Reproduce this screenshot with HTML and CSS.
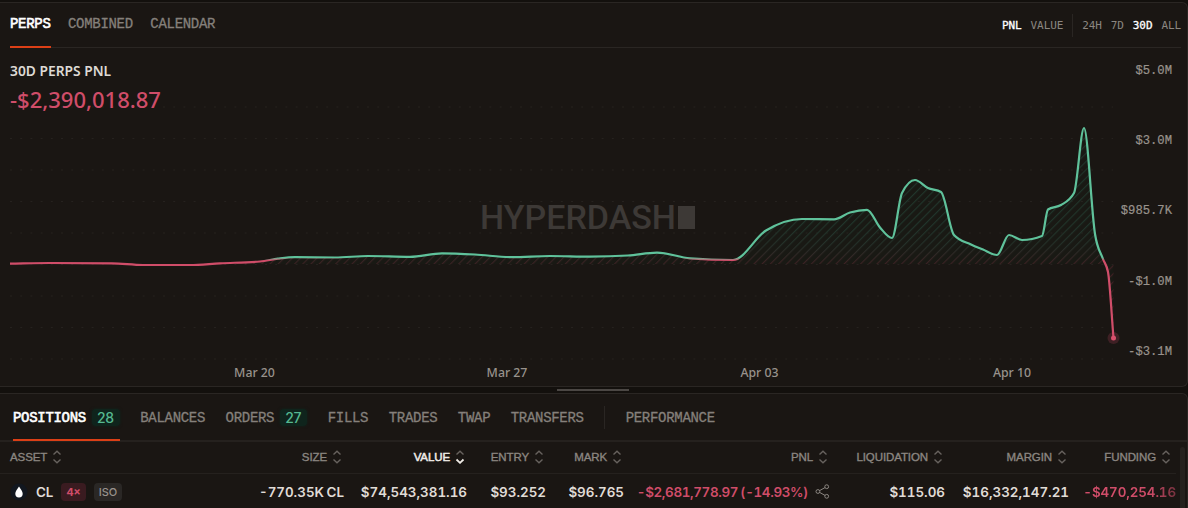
FILE: index.html
```html
<!DOCTYPE html>
<html lang="en">

<head>
    <meta charset="UTF-8">
    <meta name="viewport" content="width=device-width, initial-scale=1.0">
    <title>Hyperdash</title>
    <link rel="stylesheet" href="styles.css">
</head>

<body>

    <svg width="0" height="0" class="sprite">
        <symbol id="sort" viewBox="0 0 10 14">
            <path d="M1.5 4.5 5 1.2 8.5 4.5" />
            <path d="M1.5 9.5 5 12.8 8.5 9.5" />
        </symbol>
    </svg>

    <section class="panel chart-panel">
        <div class="chart-head">
            <nav class="tabs">
                <a class="tab active">PERPS</a>
                <a class="tab">COMBINED</a>
                <a class="tab">CALENDAR</a>
            </nav>
            <div class="toggles">
                <span class="on">PNL</span>
                <span>VALUE</span>
                <i class="sep"></i>
                <span>24H</span>
                <span>7D</span>
                <span class="on">30D</span>
                <span>ALL</span>
            </div>
        </div>

        <div class="chart-area">
            <div class="summary">
                <div class="summary-title">30D PERPS PNL</div>
                <div class="summary-value">-$2,390,018.87</div>
            </div>
            <svg class="chart" width="1188" height="338" viewBox="0 48 1188 338">
                <defs>
                    <linearGradient id="stroke" gradientUnits="userSpaceOnUse" x1="0" y1="257.5" x2="0" y2="260.5">
                        <stop offset="0" stop-color="#5fc29b" />
                        <stop offset="1" stop-color="#d04d69" />
                    </linearGradient>
                    <linearGradient id="hatch-color" gradientUnits="userSpaceOnUse" x1="0" y1="225" x2="0" y2="266">
                        <stop offset="0" stop-color="#21352b" />
                        <stop offset="0.5" stop-color="#253029" />
                        <stop offset="1" stop-color="#3f2023" />
                    </linearGradient>
                    <pattern id="hatch" width="5.8" height="5.8" patternUnits="userSpaceOnUse" patternTransform="rotate(45)">
                        <rect width="1.2" height="5.8" fill="#fff" />
                    </pattern>
                    <mask id="hatch-mask">
                        <rect y="48" width="1188" height="338" fill="url(#hatch)" />
                    </mask>
                </defs>
                <g id="grid" class="grid"></g>
                <text class="watermark" x="480" y="229" textLength="196" lengthAdjust="spacingAndGlyphs">HYPERDASH</text>
                <rect class="watermark" x="678" y="206" width="17" height="23" />
                <path id="area-tint" class="area-tint" />
                <g mask="url(#hatch-mask)">
                    <path id="area" fill="url(#hatch-color)" />
                </g>
                <path id="line" class="line" stroke="url(#stroke)" />
                <circle class="halo" cx="1113.5" cy="338" r="6" />
                <circle class="dot" cx="1113.5" cy="338" r="2.5" />
                <g class="y-axis">
                    <text x="1172" y="74">$5.0M</text>
                    <text x="1172" y="144">$3.0M</text>
                    <text x="1172" y="214">$985.7K</text>
                    <text x="1172" y="285">-$1.0M</text>
                    <text x="1172" y="355">-$3.1M</text>
                </g>
                <g class="x-axis">
                    <text x="254.5" y="377">Mar 20</text>
                    <text x="507" y="377">Mar 27</text>
                    <text x="759.5" y="377">Apr 03</text>
                    <text x="1012" y="377">Apr 10</text>
                </g>
            </svg>
        </div>
    </section>

    <div class="splitter"><i></i></div>

    <section class="panel table-panel">
        <nav class="tabs table-tabs">
            <a class="tab active">POSITIONS <b class="count">28</b></a>
            <a class="tab">BALANCES</a>
            <a class="tab">ORDERS <b class="count">27</b></a>
            <a class="tab">FILLS</a>
            <a class="tab">TRADES</a>
            <a class="tab">TWAP</a>
            <a class="tab">TRANSFERS</a>
            <i class="sep"></i>
            <a class="tab">PERFORMANCE</a>
        </nav>

        <div class="table-wrap">
            <div class="table">
                <div class="row head">
                    <span class="left">ASSET <svg class="sort"><use href="#sort" /></svg></span>
                    <span>SIZE <svg class="sort"><use href="#sort" /></svg></span>
                    <span class="sorted">VALUE
                        <svg class="sort" viewBox="0 0 10 14">
                            <path d="M1.5 4.5 5 1.2 8.5 4.5" />
                            <path class="down" d="M1.5 9.5 5 12.8 8.5 9.5" />
                        </svg>
                    </span>
                    <span>ENTRY <svg class="sort"><use href="#sort" /></svg></span>
                    <span>MARK <svg class="sort"><use href="#sort" /></svg></span>
                    <span>PNL <svg class="sort"><use href="#sort" /></svg></span>
                    <span>LIQUIDATION <svg class="sort"><use href="#sort" /></svg></span>
                    <span>MARGIN <svg class="sort"><use href="#sort" /></svg></span>
                    <span class="last">FUNDING <svg class="sort"><use href="#sort" /></svg></span>
                </div>
                <div class="row">
                    <span class="left">
                        <svg class="coin" width="18" height="18" viewBox="0 0 18 18">
                            <circle cx="9" cy="9" r="8.5" fill="#12171f" />
                            <path d="M9 3.5C10.8 6.2 12.7 8.4 12.7 10.8a3.7 3.7 0 0 1-7.4 0C5.3 8.4 7.2 6.2 9 3.5Z" fill="#fff" />
                        </svg>
                        <span class="asset">CL</span>
                        <span class="badge lev">4×</span>
                        <span class="badge">ISO</span>
                    </span>
                    <span>-770.35K CL</span>
                    <span>$74,543,381.16</span>
                    <span>$93.252</span>
                    <span>$96.765</span>
                    <span class="neg pnl">-$2,681,778.97 (-14.93%)
                        <svg class="share" width="15" height="15" viewBox="0 0 15 15">
                            <circle cx="2.9" cy="7.5" r="1.9" />
                            <circle cx="11.7" cy="2.7" r="1.9" />
                            <circle cx="11.7" cy="12.3" r="1.9" />
                            <path d="M4.6 6.6 10 3.6M4.6 8.4 10 11.4" />
                        </svg>
                    </span>
                    <span>$115.06</span>
                    <span>$16,332,147.21</span>
                    <span class="neg fade">-$470,254.16</span>
                </div>
            </div>
            <div class="scrollbar"></div>
        </div>
    </section>

    <script src="chart.js"></script>

</body>

</html>
```
FILE: styles.css
```css
body {
    margin: 0;
    height: 508px;
    overflow: hidden;
    background-color: #13100d;
    color: #e0dcd7;
    font-family: Inter, "Liberation Sans", sans-serif;
    display: flex;
    flex-direction: column;
    padding-top: 2px;
    box-sizing: border-box;
}

.sprite {
    display: none;
}

.panel {
    background-color: #1a1613;
    border: 1px solid #2a2623;
    border-left: none;
    box-sizing: border-box;
    flex-shrink: 0;
}

.chart-panel {
    height: 385px;
    border-radius: 0 6px 6px 0;
}

.chart-head {
    display: flex;
    justify-content: space-between;
    height: 45px;
    margin: 0 6px 0 10px;
    border-bottom: 1px solid #2a2623;
    box-sizing: border-box;
}

.tabs {
    display: flex;
    gap: 17.5px;
    font-family: "Liberation Mono", monospace;
    font-size: 14px;
    letter-spacing: -0.3px;
    color: #85807b;
}

.tab {
    display: flex;
    align-items: center;
    height: 45px;
    box-sizing: border-box;
    padding-bottom: 3px;
    -webkit-text-stroke: 0.3px currentColor;
}

.tab.active {
    color: #fff;
    border-bottom: 2px solid #dc3f16;
    padding-bottom: 1px;
    -webkit-text-stroke-width: 0.6px;
}

.toggles {
    display: flex;
    align-items: center;
    gap: 9px;
    font-family: "DejaVu Sans Mono", monospace;
    font-size: 11px;
    letter-spacing: -0.1px;
    color: #8b8681;
}

.toggles .on {
    color: #fff;
    -webkit-text-stroke: 0.3px #fff;
}

.sep {
    width: 1px;
    height: 23px;
    background-color: #2a2623;
}

.chart-area {
    position: relative;
}

.chart {
    display: block;
}

.summary {
    position: absolute;
    left: 10px;
    top: 13px;
    font-family: "Noto Sans", sans-serif;
}

.summary-title {
    font-size: 13.8px;
    line-height: 20px;
    font-weight: 600;
    color: #dedad5;
}

.summary-value {
    margin-top: 3px;
    font-size: 22px;
    line-height: 30px;
    font-weight: 500;
    color: #d04d69;
}

.grid line {
    stroke: #26221f;
    stroke-dasharray: 2 8.2;
}

.watermark {
    fill: #3d3936;
    font-family: Roboto, sans-serif;
    font-size: 33px;
    font-weight: 500;
}

.area-tint {
    fill: #1a3325;
    opacity: 0.12;
}

.line {
    fill: none;
    stroke-width: 2.2;
    stroke-linejoin: round;
}

.halo {
    fill: #d04d69;
    opacity: 0.2;
}

.dot {
    fill: #d9506c;
}

.y-axis text {
    fill: #98928c;
    font-family: "Liberation Mono", monospace;
    font-size: 12.2px;
    text-anchor: end;
    stroke: #98928c;
    stroke-width: 0.2px;
}

.x-axis text {
    fill: #98928c;
    font-family: "Noto Sans", sans-serif;
    font-size: 12.3px;
    font-weight: 500;
    text-anchor: middle;
}

.splitter {
    height: 6px;
    flex-shrink: 0;
    display: flex;
    justify-content: center;
    padding-top: 2px;
    box-sizing: border-box;
    margin-right: 2px;
}

.splitter i {
    width: 72px;
    height: 2px;
    background-color: #4b4744;
}

.table-panel {
    flex: 1;
    border-radius: 0 6px 0 0;
}

.table-tabs {
    height: 48px;
    box-sizing: border-box;
    padding-left: 13px;
    gap: 20.5px;
    border-bottom: 2px solid #25211e;
}

.table-tabs .tab {
    height: 47px;
    padding-bottom: 0;
}

.table-tabs .tab.active {
    padding-top: 2px;
}

.count {
    margin-left: 6px;
    padding: 0 6px 0 5px;
    background-color: #0f241c;
    border-radius: 4px;
    box-shadow: 0 0 3px #0f241c;
    color: #55b890;
    font-family: Inter, sans-serif;
    font-size: 14px;
    line-height: 17px;
    font-weight: 500;
    -webkit-text-stroke: 0;
}

.table-tabs .sep {
    align-self: center;
}

.table-wrap {
    display: flex;
}

.table {
    width: 1176px;
    flex-shrink: 0;
}

.row {
    display: grid;
    grid-template-columns: 190px 144px 123px 79px 78px 206px 115px 124px 107px;
    padding-left: 10px;
    height: 35px;
    align-items: center;
    font-size: 13.4px;
    font-weight: 600;
    font-variant-numeric: tabular-nums;
    word-spacing: -1px;
    white-space: nowrap;
}

.row > span {
    display: flex;
    align-items: center;
    justify-content: flex-end;
}

.row > .left {
    justify-content: flex-start;
}

.row.head {
    height: 32px;
    box-sizing: border-box;
    padding-bottom: 1px;
    border-bottom: 1px solid #25211e;
    color: #8b8681;
    font-family: "Liberation Sans", sans-serif;
    font-size: 11.5px;
    font-weight: 400;
    letter-spacing: -0.1px;
    -webkit-text-stroke: 0.35px currentColor;
}

.row.head .sorted {
    color: #f0ece7;
    -webkit-text-stroke-width: 0.5px;
}

.sort {
    width: 10px;
    height: 14px;
    margin: 0 2px 0 5px;
    fill: none;
    stroke: #67625e;
    stroke-width: 1.4;
}

.sort .down {
    stroke: #f0ece7;
    stroke-width: 1.8;
}

.last .sort {
    margin-right: 5px;
}

.coin {
    margin-right: 8px;
}

.badge {
    margin-left: 8px;
    padding: 0 5px;
    border-radius: 4px;
    background-color: #2a2725;
    color: #98928c;
    font-size: 11px;
    line-height: 18px;
    font-weight: 500;
}

.badge.lev {
    background-color: #3a1b20;
    color: #d04d69;
    font-weight: 700;
}

.neg {
    color: #d04d69;
}

.pnl {
    letter-spacing: -0.35px;
}

.share {
    margin-left: 7px;
    fill: none;
    stroke: #8b8681;
}

.fade {
    letter-spacing: -0.1px;
    -webkit-mask-image: linear-gradient(to right, #000 75%, rgba(0, 0, 0, 0.5));
    mask-image: linear-gradient(to right, #000 75%, rgba(0, 0, 0, 0.5));
}

.scrollbar {
    width: 5px;
    height: 70px;
    margin: 5px 0 0 4px;
    background-color: #25211e;
    border-radius: 3px 3px 0 0;
}
```
FILE: chart.js
```js
const BASELINE = 264;

const points = [
    [10, 263.6], [50, 263], [112, 263.3], [143, 265], [190, 265], [220, 263.3],
    [260, 261.5], [278, 258.7], [295, 257.2], [335, 257.5], [368, 256], [410, 256.8],
    [442, 253.3], [475, 254.5], [512, 257.2], [550, 256], [590, 256.6], [628, 255.5],
    [657, 252.6], [690, 258.3], [733, 260], [766, 230.5], [802, 219], [834, 219.3],
    [850, 212.5], [867, 209.8], [880, 227.5], [892, 238], [902, 193], [915, 180],
    [928, 188], [941, 192], [954, 235], [971, 244.5], [983, 249.5], [997, 255],
    [1009, 235], [1022, 240], [1042, 236], [1048, 209.5], [1061, 205], [1074, 193],
    [1084, 128], [1095, 234], [1103, 259], [1108, 272], [1113.5, 338]
];

// monotone cubic interpolation
function curve(pts) {
    const slope = (i) => (pts[i + 1][1] - pts[i][1]) / (pts[i + 1][0] - pts[i][0]);
    const last = pts.length - 1;
    const t = pts.map((p, i) => {
        if (i === 0) return slope(0);
        if (i === last) return slope(last - 1);
        const a = slope(i - 1);
        const b = slope(i);
        if (a * b <= 0) return 0;
        return Math.sign(a) * Math.min(Math.abs(a), Math.abs(b), Math.abs(a + b) / 4) * 2;
    });

    let d = `M${pts[0]}`;
    for (let i = 0; i < last; i++) {
        const [x0, y0] = pts[i];
        const [x1, y1] = pts[i + 1];
        const h = (x1 - x0) / 3;
        d += `C${x0 + h},${y0 + h * t[i]} ${x1 - h},${y1 - h * t[i + 1]} ${x1},${y1}`;
    }
    return d;
}

const line = curve(points);
const area = `${line}V${BASELINE}H10Z`;
document.getElementById("line").setAttribute("d", line);
document.getElementById("area").setAttribute("d", area);
document.getElementById("area-tint").setAttribute("d", area);

const grid = document.getElementById("grid");
for (let i = 0; i < 9; i++) {
    const y = 107 + i * 31.5;
    grid.innerHTML += `<line x1="10" x2="1113" y1="${y}" y2="${y}" />`;
}
```
